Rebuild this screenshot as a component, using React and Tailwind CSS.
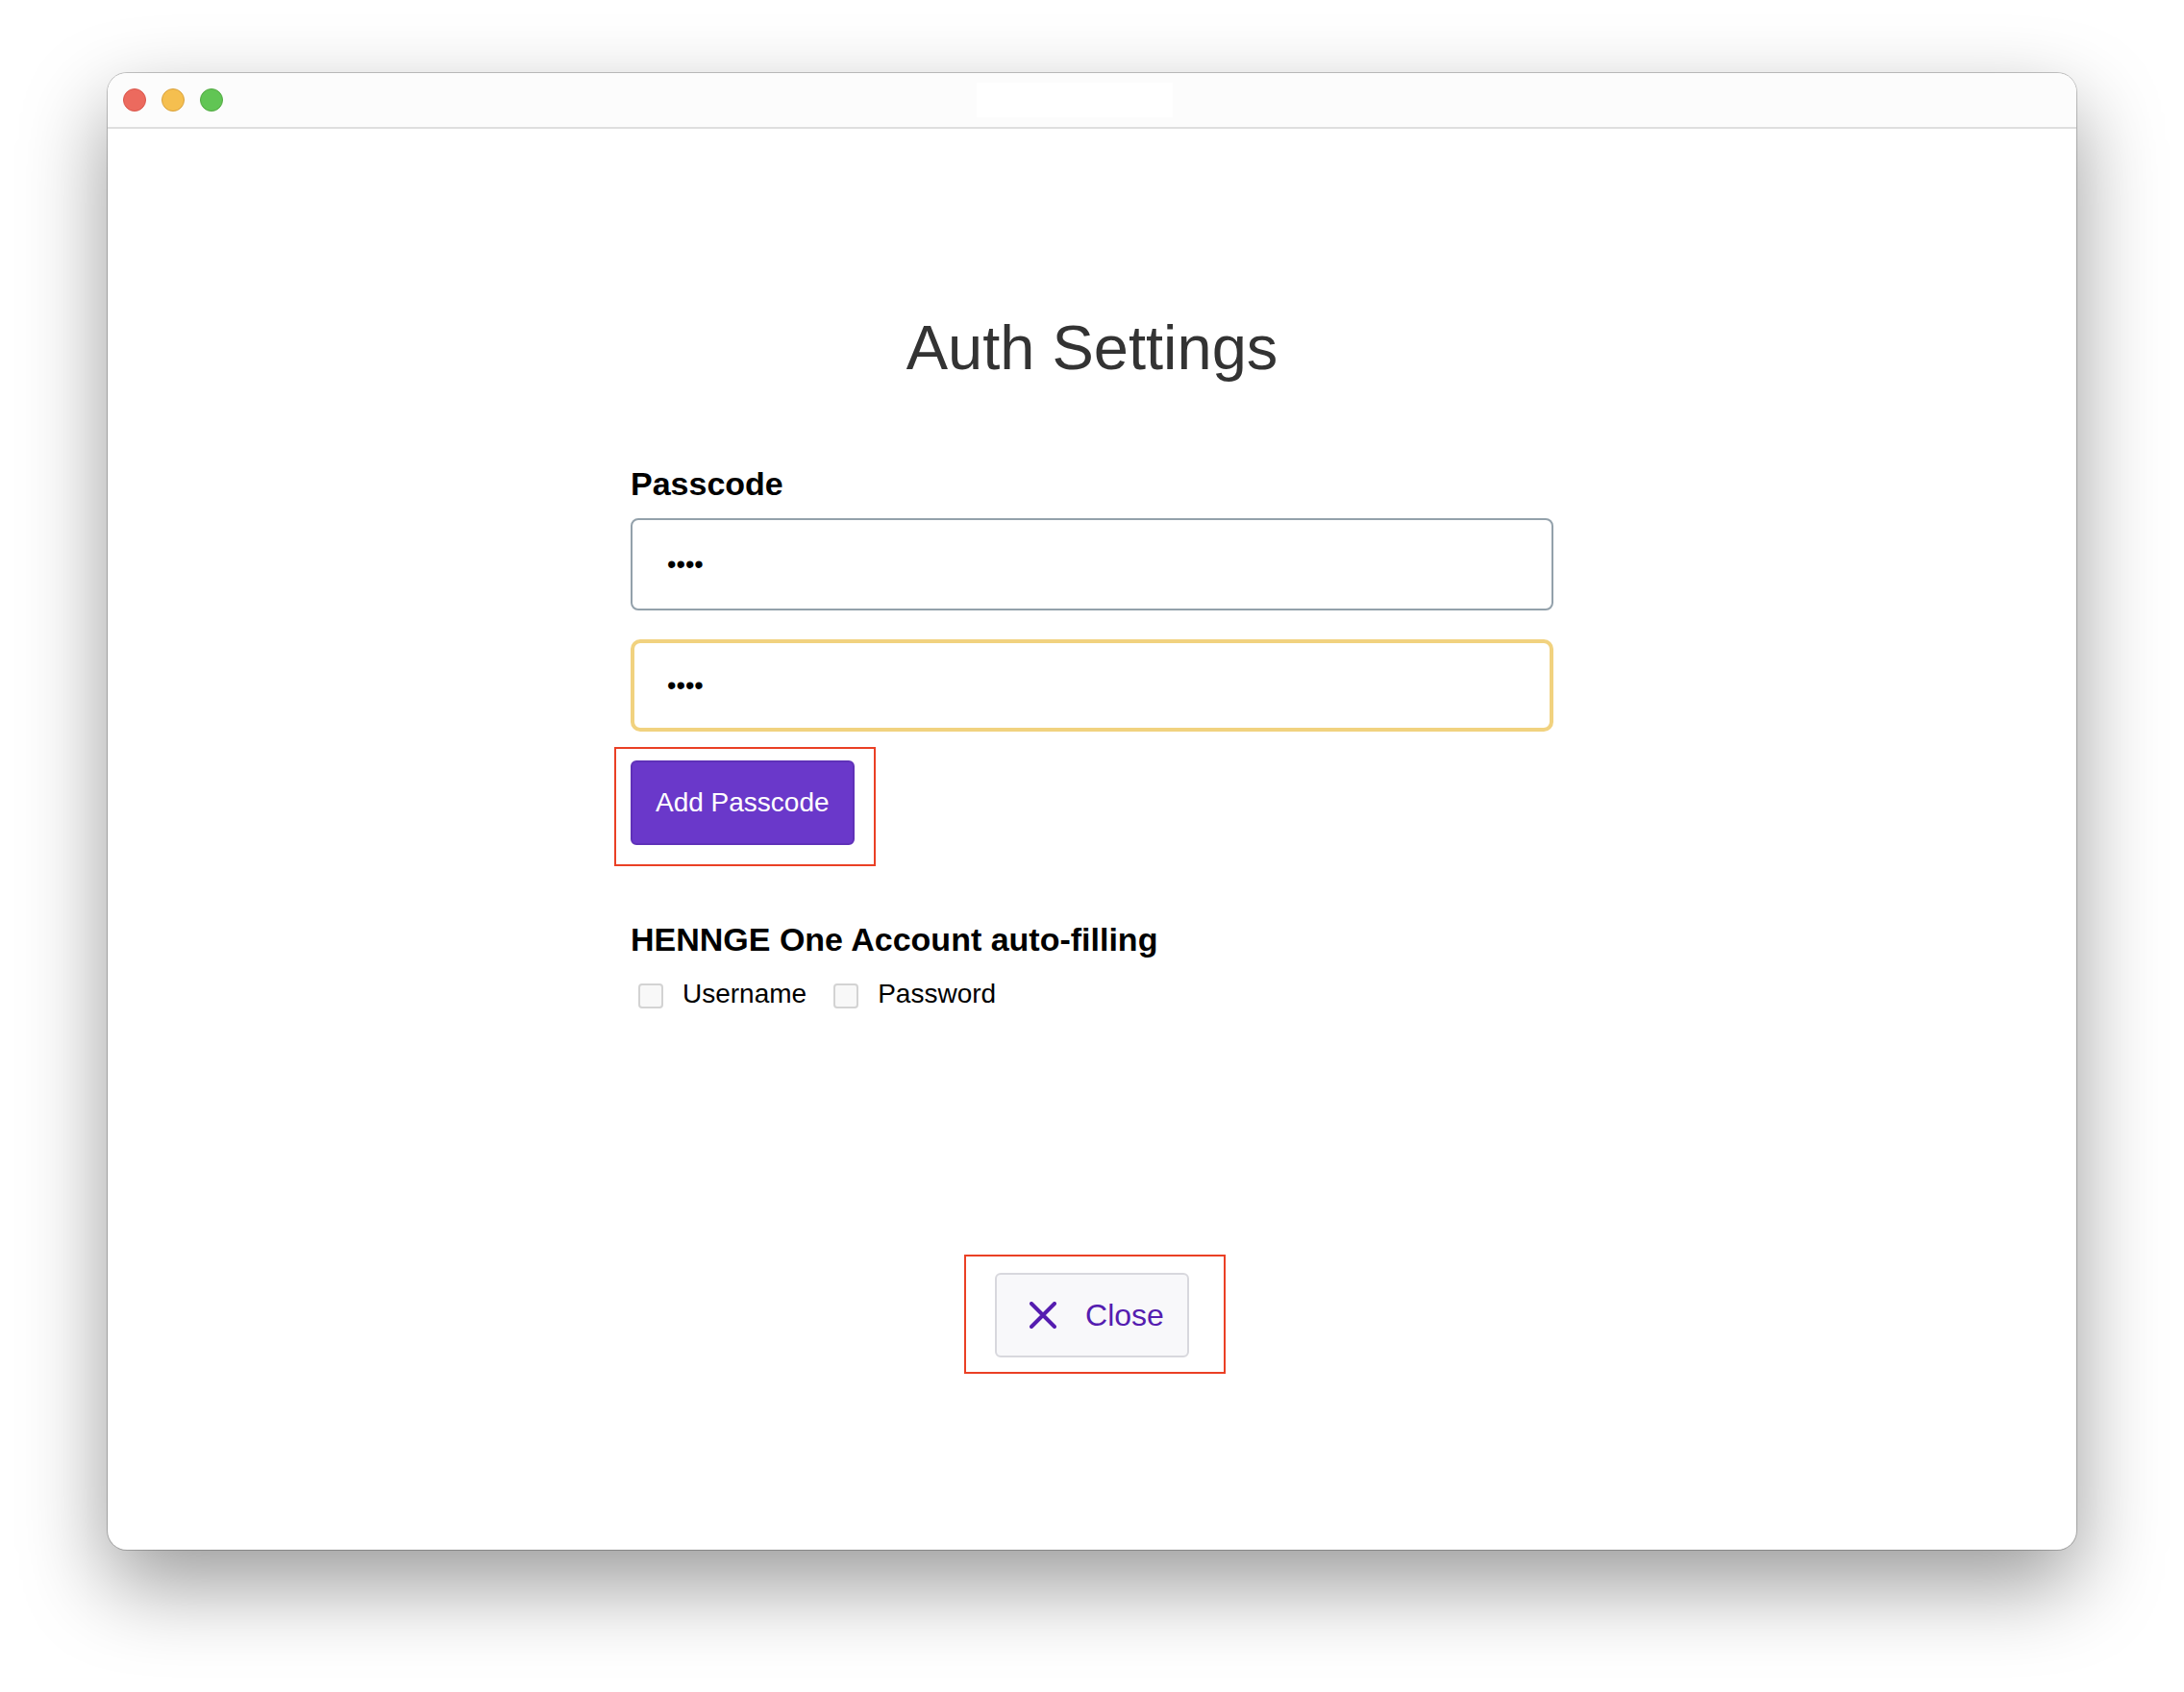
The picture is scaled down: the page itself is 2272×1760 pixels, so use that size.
import { useState } from 'react'

const inputClass = 'block h-24 w-full bg-white text-[27px] leading-8 text-black outline-none'

function TitleBar() {
  return (
    <header className="grid h-[58px] grid-cols-[1fr_auto_1fr] items-center border-b-2 border-[#dedede] bg-[#fcfcfc] pl-4 pr-[52px]">
      <div className="flex gap-4">
        <button type="button" aria-label="Close window" className="size-6 rounded-full border border-[#d9564c] bg-[#ec6a5e]" />
        <button type="button" aria-label="Minimize window" className="size-6 rounded-full border border-[#d8a13d] bg-[#f5bf4f]" />
        <button type="button" aria-label="Zoom window" className="size-6 rounded-full border border-[#52a842] bg-[#61c554]" />
      </div>
      <div className="h-9 w-[204px] bg-white" />
    </header>
  )
}

function CheckField({ id, label, checked, onChange }) {
  return (
    <div className="flex items-end gap-5">
      <input
        id={id}
        type="checkbox"
        checked={checked}
        onChange={(e) => onChange(e.target.checked)}
        className="size-[26px] appearance-none rounded-[4px] border-2 border-[#d3d3d3] bg-[#f8f8f8] checked:bg-[#6a38ca]"
      />
      <label htmlFor={id} className="text-[28px] leading-[30px]">{label}</label>
    </div>
  )
}

export default function App() {
  const [passcode, setPasscode] = useState('1234')
  const [confirmation, setConfirmation] = useState('1234')
  const [fillUsername, setFillUsername] = useState(false)
  const [fillPassword, setFillPassword] = useState(false)

  return (
    <div className="bg-white px-28 pt-[76px] pb-[148px] font-['Liberation_Sans',Arial,sans-serif] text-black">
      <div className="overflow-hidden rounded-[20px] bg-white shadow-[0_0_0_1px_rgba(0,0,0,0.22),0_36px_88px_rgba(0,0,0,0.4)]">
        <TitleBar />

        <main className="px-8 pt-48 pb-[200px]">
          <h1 className="text-center text-[65px] leading-[72px] text-[#333333]">Auth Settings</h1>

          <form className="mx-auto mt-[85px] max-w-[960px]" onSubmit={(e) => e.preventDefault()}>
            <label htmlFor="passcode" className="block text-[34px] leading-10 font-bold">Passcode</label>
            <input
              id="passcode"
              type="password"
              value={passcode}
              onChange={(e) => setPasscode(e.target.value)}
              className={`${inputClass} mt-4 rounded-[8px] border-2 border-[#93a1ab] px-9`}
            />
            <input
              type="password"
              aria-label="Confirm passcode"
              value={confirmation}
              onChange={(e) => setConfirmation(e.target.value)}
              className={`${inputClass} mt-[30px] rounded-[10px] border-4 border-[#f1d27f] px-[34px]`}
            />

            <div className="relative mt-[30px] w-fit">
              <button type="submit" className="block h-22 rounded-[6px] border-2 border-[#5f31b8] bg-[#6a38ca] px-6 text-[28px] leading-8 text-white">
                Add Passcode
              </button>
              <div className="pointer-events-none absolute -top-3.5 -left-[17px] h-[124px] w-[272px] border-2 border-[#ea4025]" />
            </div>

            <fieldset className="mt-[78px]">
              <legend className="text-[34px] leading-10 font-bold">HENNGE One Account auto-filling</legend>
              <div className="mt-[22px] flex gap-7 pl-2">
                <CheckField id="fill-username" label="Username" checked={fillUsername} onChange={setFillUsername} />
                <CheckField id="fill-password" label="Password" checked={fillPassword} onChange={setFillPassword} />
              </div>
            </fieldset>
          </form>

          <div className="relative mx-auto mt-[275px] w-fit">
            <button type="button" className="flex h-22 items-center gap-[30px] rounded-[6px] border-2 border-[#d8d8dd] bg-[#f8f8fa] pr-6 pl-[34px] text-[32px] leading-9 text-[#551db0]">
              <svg viewBox="0 0 28 28" className="size-7" fill="none" stroke="currentColor" strokeWidth="4" strokeLinecap="round">
                <path d="M2 2 26 26M26 2 2 26" />
              </svg>
              Close
            </button>
            <div className="pointer-events-none absolute -top-[19px] -left-8 h-[124px] w-[272px] border-2 border-[#ea4025]" />
          </div>
        </main>
      </div>
    </div>
  )
}
